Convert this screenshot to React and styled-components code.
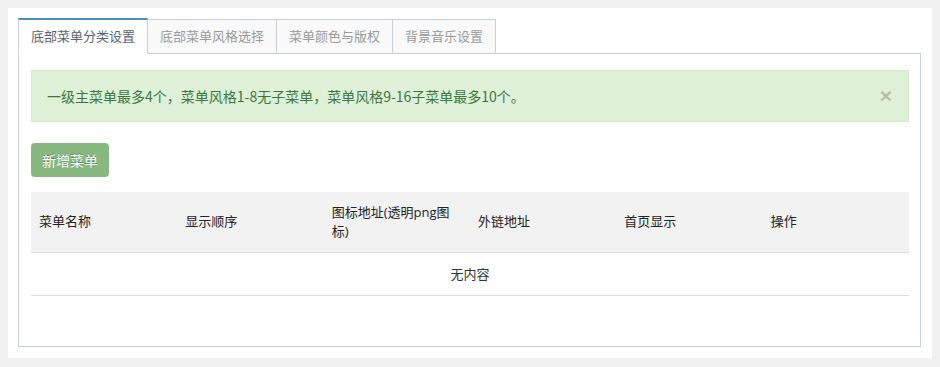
import React, { useState } from "react";
import styled, { createGlobalStyle } from "styled-components";

const GlobalStyle = createGlobalStyle`
  html, body {
    margin: 0;
    padding: 0;
    background-color: #f1f1f1;
  }
  body {
    padding: 8px;
    font-family: "Open Sans", "Noto Sans CJK SC", sans-serif;
    font-size: 13px;
    color: #393939;
  }
  * {
    box-sizing: border-box;
  }
`;

const tabs = ["底部菜单分类设置", "底部菜单风格选择", "菜单颜色与版权", "背景音乐设置"];
const columns = ["菜单名称", "显示顺序", "图标地址(透明png图标)", "外链地址", "首页显示", "操作"];

export default function App() {
  const [active, setActive] = useState(0);
  const [showAlert, setShowAlert] = useState(true);

  return (
    <>
      <GlobalStyle />
      <Page>
        <TabList>
          {tabs.map((t, i) => (
            <Tab key={t} $active={i === active} onClick={() => setActive(i)}>
              {t}
            </Tab>
          ))}
        </TabList>
        <TabContent>
          {showAlert && (
            <Alert>
              <AlertText>
                一级主菜单最多4个，菜单风格1-8无子菜单，菜单风格9-16子菜单最多10个。
              </AlertText>
              <CloseButton onClick={() => setShowAlert(false)}>×</CloseButton>
            </Alert>
          )}
          <AddButton>新增菜单</AddButton>
          <Table>
            <thead>
              <tr>
                {columns.map((c) => (
                  <HeadCell key={c}>{c}</HeadCell>
                ))}
              </tr>
            </thead>
            <tbody>
              <tr>
                <EmptyCell colSpan={columns.length}>无内容</EmptyCell>
              </tr>
            </tbody>
          </Table>
        </TabContent>
      </Page>
    </>
  );
}

const Page = styled.div`
  background-color: #ffffff;
  padding: 10px 11px 11px 10px;
`;

const TabList = styled.div`
  display: flex;
  flex-direction: row;
  align-items: flex-end;
  position: relative;
  z-index: 1;
  margin-bottom: -1px;
`;

const Tab = styled.div`
  margin-right: -1px;
  padding: 7px 12px 8px 12px;
  line-height: 18px;
  font-size: 13px;
  white-space: nowrap;
  cursor: pointer;
  border: 1px solid #c5d0dc;
  border-top: ${(p) => (p.$active ? "2px solid #4c8fbd" : "1px solid #c5d0dc")};
  border-bottom-color: ${(p) => (p.$active ? "#ffffff" : "#c5d0dc")};
  background-color: ${(p) => (p.$active ? "#ffffff" : "#f9f9f9")};
  color: ${(p) => (p.$active ? "#576373" : "#999999")};
  position: relative;
  z-index: ${(p) => (p.$active ? 2 : 1)};
`;

const TabContent = styled.div`
  border: 1px solid #c5d0dc;
  padding: 16px 11px 50px 12px;
`;

const Alert = styled.div`
  display: flex;
  flex-direction: row;
  align-items: center;
  justify-content: space-between;
  padding: 15px 16px 15px 15px;
  margin-bottom: 21px;
  background-color: #dff0d8;
  border: 1px solid #d6e9c6;
  color: #3c763d;
  line-height: 20px;
`;

const AlertText = styled.div`
  font-family: "Noto Sans CJK SC", sans-serif;
  font-size: 14px;
`;

const CloseButton = styled.button`
  border: 0;
  padding: 0;
  background: none;
  font-family: "Liberation Sans", sans-serif;
  font-size: 21px;
  font-weight: bold;
  line-height: 1;
  color: #000000;
  opacity: 0.2;
  text-shadow: 0 1px 0 #ffffff;
  cursor: pointer;
  margin-top: -2px;
`;

const AddButton = styled.button`
  display: block;
  height: 34px;
  padding: 0 11px;
  margin: 0 0 15px 0;
  border: 0;
  border-radius: 4px;
  background-color: #87b87f;
  color: #ffffff;
  font-family: "Open Sans", "Noto Sans CJK SC", sans-serif;
  font-size: 14px;
  text-shadow: 0 -1px 0 rgba(0, 0, 0, 0.25);
  cursor: pointer;
`;

const Table = styled.table`
  width: 100%;
  border-collapse: collapse;
  table-layout: fixed;
`;

const HeadCell = styled.th`
  height: 60px;
  padding: 8px;
  text-align: left;
  vertical-align: middle;
  font-weight: normal;
  font-size: 13px;
  line-height: 19px;
  color: #222222;
  background-color: #f2f2f2;
  border-bottom: 1px solid #dddddd;
`;

const EmptyCell = styled.td`
  height: 43px;
  padding: 8px;
  text-align: center;
  font-size: 13px;
  color: #333333;
  border-bottom: 1px solid #dddddd;
`;
